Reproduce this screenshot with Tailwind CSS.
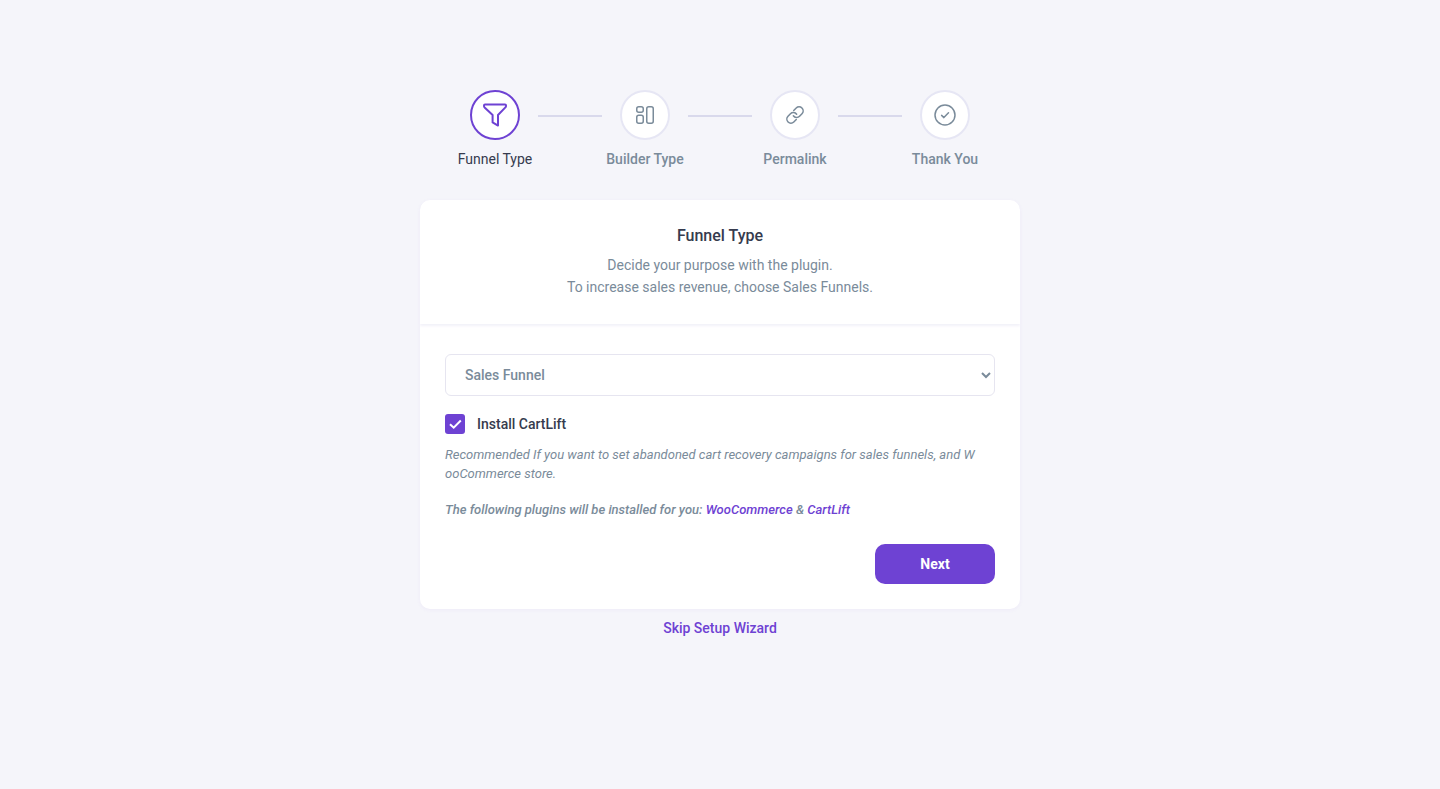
<!DOCTYPE html>
<html lang="en">
<head>
  <meta charset="UTF-8">
  <meta name="viewport" content="width=device-width, initial-scale=1.0">
  <title>Setup Wizard</title>
  <script src="https://cdn.jsdelivr.net/npm/@tailwindcss/browser@4"></script>
</head>
<body class="min-h-screen bg-[#f5f5fa] font-[Roboto,sans-serif] text-sm text-[#7a8b9a] antialiased">
  <main class="max-w-[600px] mx-auto pt-[90px] pb-10">

    <!-- Steps -->
    <ol class="flex justify-center mb-[31px]">
      <li class="w-[86px] flex flex-col items-center">
        <span class="size-[50px] rounded-full border-2 border-[#6e42d3] bg-white flex items-center justify-center">
          <svg class="size-6" viewBox="0 0 24 24" fill="none" stroke="#6e42d3" stroke-width="2" stroke-linecap="round" stroke-linejoin="round">
            <path d="M2 1.400h20q1 0 1 1v.6q0 .8-.6 1.400L15 12v10.600l-5.400-3.200V12L1.600 4.400Q1 3.800 1 3V2.400q0-1 1-1z"/>
          </svg>
        </span>
        <span class="mt-[9px] leading-5 whitespace-nowrap text-[#363b4e]">Funnel Type</span>
      </li>
      <li class="w-16 h-0.5 mt-[25px] bg-[#d9d9ec]" aria-hidden="true"></li>
      <li class="w-[86px] flex flex-col items-center">
        <span class="size-[50px] rounded-full border-2 border-[#e6e6f4] bg-white flex items-center justify-center">
          <svg class="w-[18px] h-[18px]" viewBox="0 0 18 18" fill="none" stroke="#7a8b9a" stroke-width="1.500">
            <rect x=".75" y=".75" width="6.500" height="5.500" rx="2"/>
            <rect x=".75" y="9.250" width="6.500" height="8" rx="2"/>
            <rect x="10.750" y=".75" width="6.500" height="16.500" rx="2"/>
          </svg>
        </span>
        <span class="mt-[9px] leading-5 font-medium whitespace-nowrap">Builder Type</span>
      </li>
      <li class="w-16 h-0.5 mt-[25px] bg-[#d9d9ec]" aria-hidden="true"></li>
      <li class="w-[86px] flex flex-col items-center">
        <span class="size-[50px] rounded-full border-2 border-[#e6e6f4] bg-white flex items-center justify-center">
          <svg class="size-[18px]" viewBox="1 1 22 22" fill="none" stroke="#7a8b9a" stroke-width="1.900" stroke-linecap="round" stroke-linejoin="round">
            <path d="M10 13a5 5 0 0 0 7.540.540l3-3a5 5 0 0 0-7.070-7.070l-3 3"/>
            <path d="M14 11a5 5 0 0 0-7.540-.540l-3 3a5 5 0 0 0 7.070 7.070l3-3"/>
          </svg>
        </span>
        <span class="mt-[9px] leading-5 font-medium whitespace-nowrap">Permalink</span>
      </li>
      <li class="w-16 h-0.5 mt-[25px] bg-[#d9d9ec]" aria-hidden="true"></li>
      <li class="w-[86px] flex flex-col items-center">
        <span class="size-[50px] rounded-full border-2 border-[#e6e6f4] bg-white flex items-center justify-center">
          <svg class="size-[22px]" viewBox="0 0 22 22" fill="none" stroke="#7a8b9a" stroke-width="1.500" stroke-linecap="round" stroke-linejoin="round">
            <circle cx="11" cy="11" r="10"/>
            <path d="M7.600 11.400l2.300 2.200 4.600-4.800"/>
          </svg>
        </span>
        <span class="mt-[9px] leading-5 font-medium whitespace-nowrap">Thank You</span>
      </li>
    </ol>

    <!-- Card -->
    <section class="rounded-[10px] bg-white shadow-[0_1px_4px_rgba(110,66,211,0.05)]">
      <header class="pt-6 pb-[26px] px-6 text-center rounded-t-[10px] shadow-[0_2px_3px_#f2f1f9]">
        <h1 class="text-base leading-6 font-medium text-[#363b4e]">Funnel Type</h1>
        <p class="mt-1.5 leading-[22px]">Decide your purpose with the plugin.<br>To increase sales revenue, choose Sales Funnels.</p>
      </header>

      <form class="px-[25px] pt-[30px] pb-[25px]">
        <select aria-label="Funnel type" class="block w-full h-[42px] pl-[15px] rounded-md border border-[#e6e5f0] bg-white font-medium">
          <option>Sales Funnel</option>
        </select>

        <div class="mt-[18px] flex items-center gap-3">
          <span class="grid size-5">
            <input id="cartlift" type="checkbox" checked class="col-start-1 row-start-1 appearance-none size-5 rounded-[3px] bg-[#6e42d3]">
            <svg class="col-start-1 row-start-1 size-5 pointer-events-none" viewBox="0 0 20 20" fill="none" stroke="#fff" stroke-width="2">
              <path d="M5 10.200l3.700 3.500L15.800 6.500"/>
            </svg>
          </span>
          <label for="cartlift" class="leading-5 font-medium text-[#363b4e]">Install CartLift</label>
        </div>

        <p class="mt-[11px] text-[13px] leading-[19px] italic break-all">Recommended If you want to set abandoned cart recovery campaigns for sales funnels, and W<br>ooCommerce store.</p>
        <p class="mt-[17px] text-[13px] leading-[19px] italic font-medium">The following plugins will be installed for you: <a href="#" class="text-[#6e42d3]">WooCommerce</a> &amp; <a href="#" class="text-[#6e42d3]">CartLift</a></p>

        <div class="mt-[25px] flex justify-end">
          <button type="button" class="w-[120px] h-10 rounded-[10px] bg-[#6e42d3] font-bold text-white">Next</button>
        </div>
      </form>
    </section>

    <div class="mt-[9px] text-center">
      <a href="#" class="leading-5 font-medium text-[#6e42d3]">Skip Setup Wizard</a>
    </div>
  </main>
</body>
</html>
